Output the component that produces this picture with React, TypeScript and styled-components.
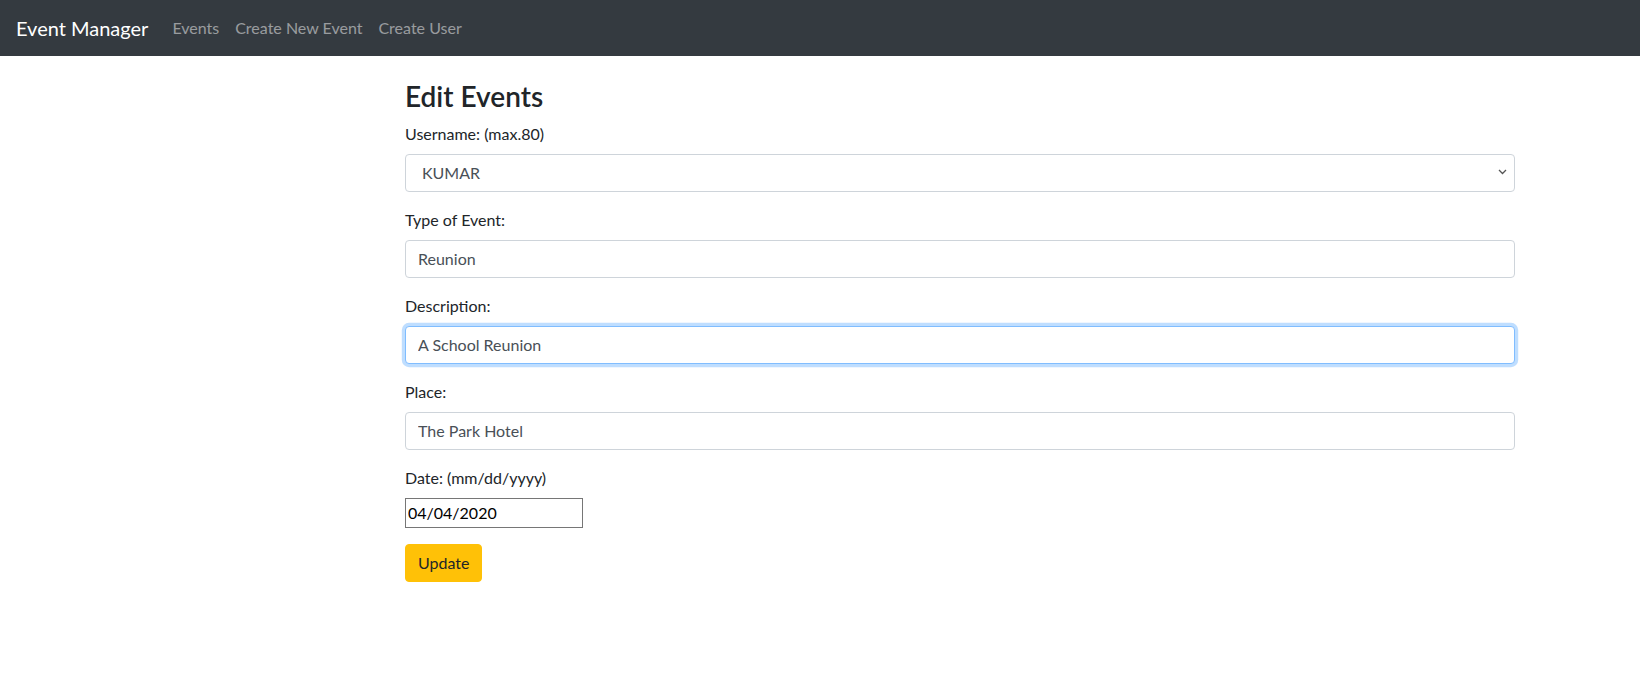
import React from 'react';
import styled, { createGlobalStyle, css } from 'styled-components';

const GlobalStyle = createGlobalStyle`
  *, *::before, *::after {
    box-sizing: border-box;
  }

  body {
    margin: 0;
    font-family: 'Segoe UI', Lato, 'Liberation Sans', sans-serif;
    font-size: 16px;
    line-height: 1.5;
    color: #212529;
    background: #fff;
  }
`;

const Navbar = styled.nav`
  display: flex;
  align-items: center;
  padding: 8px 16px;
  background: #343a40;
`;

const Brand = styled.a`
  display: inline-block;
  padding: 5px 0;
  margin-right: 16px;
  font-size: 20px;
  line-height: 30px;
  color: #fff;
  text-decoration: none;
  white-space: nowrap;
`;

const NavList = styled.ul`
  display: flex;
  margin: 0;
  padding: 0;
  list-style: none;
`;

const NavLink = styled.a`
  display: block;
  padding: 8px;
  color: rgba(255, 255, 255, 0.5);
  text-decoration: none;
`;

const Main = styled.main`
  width: 1110px;
  margin: 0 0 0 405px;
`;

const Title = styled.h3`
  margin: 24px 0 8px;
  font-size: 28px;
  font-weight: 600;
  line-height: 1.2;
`;

const FormGroup = styled.div`
  margin-bottom: 16px;
`;

const Label = styled.label`
  display: inline-block;
  margin-bottom: 8px;
`;

const controlStyles = css`
  display: block;
  width: 100%;
  height: 38px;
  padding: 6px 12px;
  font-family: inherit;
  font-size: 16px;
  line-height: 1.5;
  color: #495057;
  background: #fff;
  border: 1px solid #ced4da;
  border-radius: 4px;
  outline: none;
`;

const Input = styled.input<{ $focused?: boolean }>`
  ${controlStyles}

  ${({ $focused }) =>
    $focused &&
    css`
      border-color: #80bdff;
      box-shadow: 0 0 0 3.2px rgba(0, 123, 255, 0.25);
    `}
`;

const SelectWrap = styled.div`
  position: relative;
`;

const Select = styled.select`
  ${controlStyles}
  appearance: none;
  padding-left: 16px;
`;

const Chevron = styled.svg`
  position: absolute;
  right: 8px;
  top: 15px;
  pointer-events: none;
`;

const DateInput = styled.input`
  display: block;
  width: 178px;
  height: 30px;
  padding: 1px 2px;
  font-family: inherit;
  font-size: 16px;
  line-height: 1.5;
  color: #000;
  border: 1px solid #767676;
  border-radius: 0;
  outline: none;
`;

const Button = styled.button`
  display: inline-block;
  padding: 6px 12px;
  font-family: inherit;
  font-size: 16px;
  line-height: 1.5;
  color: #212529;
  background: #ffc107;
  border: 1px solid #ffc107;
  border-radius: 4px;
  cursor: pointer;
`;

const App = () => {
  return (
    <>
      <GlobalStyle />
      <Navbar>
        <Brand href="#">Event Manager</Brand>
        <NavList>
          <li><NavLink href="#">Events</NavLink></li>
          <li><NavLink href="#">Create New Event</NavLink></li>
          <li><NavLink href="#">Create User</NavLink></li>
        </NavList>
      </Navbar>

      <Main>
        <Title>Edit Events</Title>
        <form onSubmit={(e) => e.preventDefault()}>
          <FormGroup>
            <Label>Username: (max.80)</Label>
            <SelectWrap>
              <Select defaultValue="KUMAR">
                <option value="KUMAR">KUMAR</option>
              </Select>
              <Chevron width="9" height="6" viewBox="0 0 9 6">
                <path d="M1 1l3.5 3.5L8 1" fill="none" stroke="#555" strokeWidth="1.3" />
              </Chevron>
            </SelectWrap>
          </FormGroup>

          <FormGroup>
            <Label>Type of Event:</Label>
            <Input type="text" defaultValue="Reunion" />
          </FormGroup>

          <FormGroup>
            <Label>Description:</Label>
            <Input type="text" defaultValue="A School Reunion" $focused />
          </FormGroup>

          <FormGroup>
            <Label>Place:</Label>
            <Input type="text" defaultValue="The Park Hotel" />
          </FormGroup>

          <FormGroup>
            <Label>Date: (mm/dd/yyyy)</Label>
            <DateInput type="text" defaultValue="04/04/2020" />
          </FormGroup>

          <Button type="submit">Update</Button>
        </form>
      </Main>
    </>
  );
};

export default App;
